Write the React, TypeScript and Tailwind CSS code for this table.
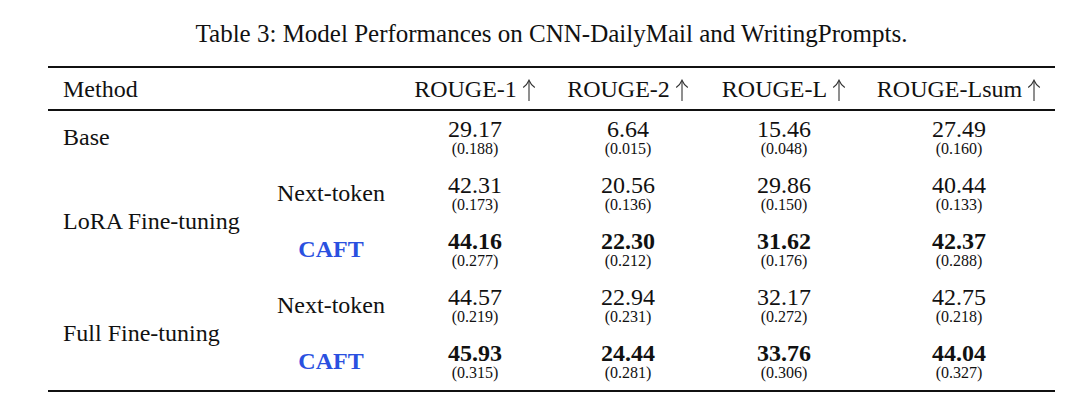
const rowStart = ['row-start-1', 'row-start-2', 'row-start-3', 'row-start-4', 'row-start-5']
const colStart = ['col-start-3', 'col-start-4', 'col-start-5', 'col-start-6']

const headers = ['ROUGE-1', 'ROUGE-2', 'ROUGE-L', 'ROUGE-Lsum']

const rows: { sub: string | null; bold: boolean; vals: [string, string][] }[] = [
  { sub: null, bold: false, vals: [['29.17', '0.188'], ['6.64', '0.015'], ['15.46', '0.048'], ['27.49', '0.160']] },
  { sub: 'Next-token', bold: false, vals: [['42.31', '0.173'], ['20.56', '0.136'], ['29.86', '0.150'], ['40.44', '0.133']] },
  { sub: 'CAFT', bold: true, vals: [['44.16', '0.277'], ['22.30', '0.212'], ['31.62', '0.176'], ['42.37', '0.288']] },
  { sub: 'Next-token', bold: false, vals: [['44.57', '0.219'], ['22.94', '0.231'], ['32.17', '0.272'], ['42.75', '0.218']] },
  { sub: 'CAFT', bold: true, vals: [['45.93', '0.315'], ['24.44', '0.281'], ['33.76', '0.306'], ['44.04', '0.327']] },
]

const cols = 'grid grid-cols-[215px_136px_152px_154px_158px_192px]'

function UpArrow() {
  return (
    <svg className="inline-block ml-[5px] align-[-4px]" width="14" height="22" viewBox="0 0 14 22" fill="none">
      <path d="M7 1.5V22" stroke="#333" strokeWidth="1.1" />
      <path d="M1.2 8.5C3.6 6.8 5.6 4.6 7 1.2C8.4 4.6 10.4 6.8 12.8 8.5" stroke="#333" strokeWidth="1.1" />
    </svg>
  )
}

export default function App() {
  return (
    <div className="w-[1080px] h-[410px] bg-white overflow-hidden text-[#111] font-['Liberation_Serif','Times_New_Roman',serif]">
      <div className="ml-[48px] w-[1007px]">
        {/* Caption */}
        <div className="pt-[21px] text-center text-[25px] leading-[25px]">
          Table 3: Model Performances on CNN-DailyMail and WritingPrompts.
        </div>

        <div className="mt-[20px] h-[2px] bg-[#111]" />

        {/* Header */}
        <div className={`${cols} pt-[9px] pb-[8px] text-[24px] leading-[24px]`}>
          <div className="pl-[15px]">Method</div>
          <div />
          {headers.map((h) => (
            <div key={h} className="text-center whitespace-nowrap">
              {h}
              <UpArrow />
            </div>
          ))}
        </div>

        <div className="h-[2px] bg-[#111]" />

        {/* Body */}
        <div className={`${cols} grid-rows-[40px_40px_40px_40px_40px] gap-y-4 pt-[6px] pb-[9px]`}>
          <div className="col-start-1 row-start-1 self-center pl-[15px] text-[24px] leading-[24px]">Base</div>
          <div className="col-start-1 row-start-2 row-span-2 self-center pl-[15px] text-[24px] leading-[24px]">LoRA Fine-tuning</div>
          <div className="col-start-1 row-start-4 row-span-2 self-center pl-[15px] text-[24px] leading-[24px]">Full Fine-tuning</div>

          {rows.map((r, i) => (
            <div key={`s${i}`} className="contents">
              {r.sub && (
                <div
                  className={`col-start-2 ${rowStart[i]} self-center text-center text-[24px] leading-[24px] ${
                    r.bold ? 'font-bold text-[#2a50e0]' : ''
                  }`}
                >
                  {r.sub}
                </div>
              )}
              {r.vals.map(([v, sd], j) => (
                <div key={j} className={`${colStart[j]} ${rowStart[i]} flex flex-col items-center`}>
                  <span className={`text-[24px] leading-[24px] ${r.bold ? 'font-bold' : ''}`}>{v}</span>
                  <span className="text-[16px] leading-[16px]">({sd})</span>
                </div>
              ))}
            </div>
          ))}
        </div>

        <div className="h-[2px] bg-[#111]" />
      </div>
    </div>
  )
}
